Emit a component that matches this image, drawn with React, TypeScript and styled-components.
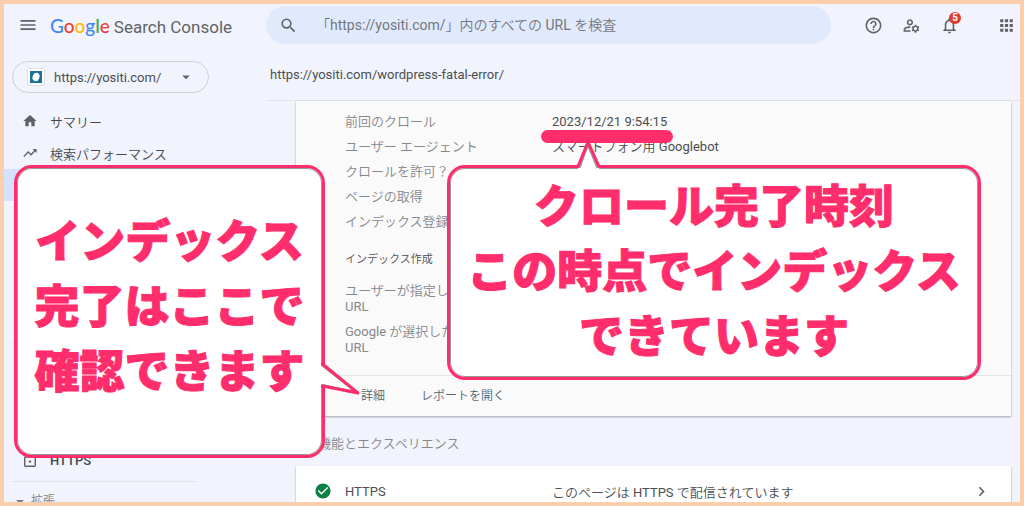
import React from "react";
import styled, { createGlobalStyle } from "styled-components";
import { MdHelpOutline, MdMenu, MdSearch, MdHome, MdTrendingUp, MdArrowDropDown, MdApps, MdChevronRight, MdCheckCircle, MdOutlineManageAccounts, MdNotificationsNone } from "react-icons/md";

const PINK = "#ff2d6b";
const LINE = "#e1e4e8";

const GlobalStyle = createGlobalStyle`
  * { box-sizing: border-box; }
  body {
    margin: 0;
    font-family: Roboto, "Noto Sans CJK JP DemiLight", "Noto Sans CJK JP", sans-serif;
    color: #4b4e52;
  }
  a { color: inherit; text-decoration: none; }
  button { font: inherit; color: inherit; background: none; border: 0; padding: 0; cursor: pointer; }
  h1, h2, h3, dl, dd, dt, p, ul { margin: 0; padding: 0; font-weight: 400; }
`;

const Frame = styled.div`
  position: relative;
  display: flex;
  height: 100vh;
  overflow: hidden;
  border: 4px solid #fccfac;
  background: #f1f4fc;
`;

const Sidebar = styled.aside`
  flex: 0 0 262px;
  padding-left: 8px;
`;

const Brand = styled.div`
  display: flex;
  align-items: center;
  gap: 12px;
  height: 42px;
  padding-left: 6px;
`;

const IconButton = styled.button`
  display: flex;
  color: #5f6368;
`;

const Logo = styled.a`
  display: flex;
  align-items: baseline;
  gap: 4px;
  font-size: 17px;
  color: #5f6368;
`;

const Wordmark = styled.span`
  font-family: Lato, sans-serif;
  font-size: 19px;
  font-weight: 500;
`;

const Letter = styled.span<{ $c: string }>`
  color: ${(p) => p.$c};
`;

const Property = styled.button`
  display: flex;
  align-items: center;
  width: 197px;
  height: 32px;
  margin-top: 15px;
  padding: 0 13px 0 14px;
  border: 1px solid #cfd1d4;
  border-radius: 16px;
  font-size: 13px;
`;

const PropertyName = styled.span`
  flex: 1;
  padding-left: 9px;
  text-align: left;
`;

const Nav = styled.nav`
  padding-top: 12px;
  font-size: 13px;
`;

const NavItem = styled.a<{ $active?: boolean; $strong?: boolean }>`
  display: flex;
  align-items: center;
  gap: 12px;
  height: 32px;
  margin-left: -8px;
  padding-left: 18px;
  color: #45484c;
  font-weight: ${(p) => (p.$strong ? 500 : 400)};
  background: ${(p) => (p.$active ? "#d3e2fd" : "none")};
  svg { color: #5f6368; }
`;

const NavGroup = styled.div<{ $h: number }>`
  display: flex;
  flex-direction: column;
  justify-content: flex-end;
  height: ${(p) => p.$h}px;
  margin-top: 5px;
  margin-right: 69px;
  border-top: 1px solid ${LINE};
`;

const NavHeading = styled.button`
  display: flex;
  align-items: center;
  gap: 7px;
  height: 36px;
  padding-left: 4px;
  font-size: 12px;
  color: #7b7e83;
`;

const Main = styled.main`
  flex: 1;
  min-width: 0;
`;

const TopBar = styled.header`
  display: flex;
  align-items: center;
  height: 42px;
`;

const SearchBox = styled.label`
  display: flex;
  flex: 1;
  align-items: center;
  gap: 16px;
  height: 38px;
  padding-left: 13px;
  border-radius: 19px;
  background: #e1eafd;
  color: #5f6368;
  input {
    flex: 1;
    min-width: 0;
    border: 0;
    outline: 0;
    background: none;
    font: inherit;
    font-size: 14px;
  }
  input::placeholder { color: #74777c; opacity: 1; }
`;

const Actions = styled.div`
  display: flex;
  align-items: center;
  gap: 19px;
  padding: 0 4px 0 33px;
`;

const Bell = styled(IconButton)`
  position: relative;
  margin-right: 19px;
`;

const Badge = styled.span`
  position: absolute;
  top: -4px;
  right: -2px;
  width: 12px;
  height: 12px;
  border-radius: 6px;
  background: #e0392d;
  color: #fff;
  font-size: 10px;
  font-weight: 700;
  line-height: 12px;
  text-align: center;
`;

const UrlBar = styled.p`
  display: flex;
  align-items: center;
  height: 55px;
  padding: 2px 0 0 4px;
  border-bottom: 1px solid ${LINE};
  font-size: 13px;
`;

const Content = styled.div`
  padding: 0 9px 0 30px;
`;

const Card = styled.section<{ $bg: string }>`
  background: ${(p) => p.$bg};
  box-shadow: 0 1px 2px rgba(60, 64, 67, 0.45);
`;

const Details = styled.dl`
  padding: 8px 0 0 49px;
  font-size: 13px;
`;

const Row = styled.div<{ $tall?: boolean }>`
  display: grid;
  grid-template-columns: 122px 1fr;
  column-gap: 85px;
  min-height: ${(p) => (p.$tall ? 41 : 25)}px;
  line-height: 16px;
  padding-top: 5px;
  white-space: nowrap;
  dt { color: #85888b; }
`;

const SubHeading = styled.h3`
  padding: 18px 0 10px 49px;
  font-size: 11px;
  line-height: 16px;
`;

const IndexDetails = styled(Details)`
  padding-top: 0;
  padding-bottom: 15px;
`;

const CardFooter = styled.div`
  display: flex;
  gap: 36px;
  height: 41px;
  padding: 0 0 4px 65px;
  border-top: 1px solid ${LINE};
  font-size: 12px;
  color: #54656f;
`;

const SectionTitle = styled.h2`
  height: 50px;
  padding-left: 22px;
  font-size: 13px;
  line-height: 56px;
  color: #85888b;
`;

const HttpsRow = styled.a`
  display: grid;
  grid-template-columns: 31px 207px 1fr 20px;
  align-items: center;
  height: 50px;
  padding: 0 19px 0 18px;
  font-size: 13px;
`;

const Marker = styled.div`
  position: absolute;
  top: 126px;
  left: 537px;
  width: 132px;
  height: 13px;
  border-radius: 7px;
  background: ${PINK};
`;

const Callout = styled.div<{ $left: number; $width: number; $height: number; $pad: number }>`
  position: absolute;
  top: 161px;
  left: ${(p) => p.$left}px;
  width: ${(p) => p.$width}px;
  height: ${(p) => p.$height}px;
  padding-top: ${(p) => p.$pad}px;
  border: 3px solid ${PINK};
  border-radius: 18px;
  background: #fff;
  box-shadow: inset 0 0 0 1px #999;
  color: ${PINK};
  font-family: "Noto Sans CJK JP", sans-serif;
  font-size: 45px;
  font-weight: 900;
  line-height: 65px;
  text-align: center;
  white-space: nowrap;
  -webkit-text-stroke: 1px ${PINK};
`;

const RightTail = styled.svg`
  position: absolute;
  top: 192px;
  right: -39px;
`;

const TopTail = styled.svg`
  position: absolute;
  top: -29px;
  left: 124px;
`;

const letters: [string, string][] = [
  ["G", "#4285f4"], ["o", "#ea4335"], ["o", "#fbbc05"], ["g", "#4285f4"], ["l", "#34a853"], ["e", "#ea4335"],
];

const crawlRows: [string, string][] = [
  ["前回のクロール", "2023/12/21 9:54:15"],
  ["ユーザー エージェント", "スマートフォン用 Googlebot"],
  ["クロールを許可？", ""],
  ["ページの取得", ""],
  ["インデックス登録", ""],
];

export default function App() {
  return (
    <>
      <GlobalStyle />
      <Frame>
        <Sidebar>
          <Brand>
            <IconButton aria-label="メニュー"><MdMenu size={20} /></IconButton>
            <Logo href="#">
              <Wordmark>{letters.map(([l, c], i) => <Letter key={i} $c={c}>{l}</Letter>)}</Wordmark>
              <span>Search Console</span>
            </Logo>
          </Brand>
          <Property>
            <svg width="18" height="18" viewBox="0 0 18 18">
              <rect x=".5" y=".5" width="17" height="17" rx="1" fill="#fff" stroke="#dde0e4" />
              <rect x="3" y="3" width="12" height="12" fill="#1b7197" />
              <ellipse cx="9" cy="9" rx="3.4" ry="4.2" fill="#fff" transform="rotate(20 9 9)" />
            </svg>
            <PropertyName>https://yositi.com/</PropertyName>
            <MdArrowDropDown size={18} color="#5f6368" />
          </Property>
          <Nav>
            <NavItem href="#"><MdHome size={16} />サマリー</NavItem>
            <NavItem href="#"><MdTrendingUp size={16} />検索パフォーマンス</NavItem>
            <NavItem href="#" $active aria-label="URL 検査" />
            <NavGroup $h={132} />
            <NavGroup $h={133}>
              <NavItem href="#" $strong>
                <svg width="16" height="16" viewBox="0 0 16 16" fill="none" stroke="currentColor" strokeWidth="1.4">
                  <rect x="2.7" y="5" width="10.6" height="9.3" rx="1" />
                  <path d="M5.3 5V3.7a2.7 2.7 0 0 1 5.4 0V5" />
                  <circle cx="8" cy="9.6" r="1.2" fill="currentColor" stroke="none" />
                </svg>
                HTTPS
              </NavItem>
            </NavGroup>
            <NavGroup $h={36}>
              <NavHeading>
                <svg width="8" height="8" viewBox="0 0 8 8"><path d="M0 4h8L4 8z" fill="currentColor" /></svg>
                拡張
              </NavHeading>
            </NavGroup>
          </Nav>
        </Sidebar>
        <Main>
          <TopBar>
            <SearchBox>
              <MdSearch size={19} />
              <input type="text" aria-label="URL を検査" placeholder="「https://yositi.com/」内のすべての URL を検査" />
            </SearchBox>
            <Actions>
              <IconButton aria-label="ヘルプ"><MdHelpOutline size={19} /></IconButton>
              <IconButton aria-label="ユーザー設定"><MdOutlineManageAccounts size={19} /></IconButton>
              <Bell aria-label="通知"><MdNotificationsNone size={19} /><Badge>5</Badge></Bell>
              <IconButton aria-label="アプリ"><MdApps size={19} /></IconButton>
            </Actions>
          </TopBar>
          <UrlBar>https://yositi.com/wordpress-fatal-error/</UrlBar>
          <Content>
            <Card $bg="#fafafa">
              <Details>
                {crawlRows.map(([k, v]) => <Row key={k}><dt>{k}</dt><dd>{v}</dd></Row>)}
              </Details>
              <SubHeading>インデックス作成</SubHeading>
              <IndexDetails>
                <Row $tall><dt>ユーザーが指定した<br />URL</dt><dd /></Row>
                <Row $tall><dt>Google が選択した<br />URL</dt><dd /></Row>
              </IndexDetails>
              <CardFooter>
                <button>詳細</button>
                <button>レポートを開く</button>
              </CardFooter>
            </Card>
            <SectionTitle>機能とエクスペリエンス</SectionTitle>
            <Card $bg="#fff">
              <HttpsRow href="#">
                <MdCheckCircle size={18} color="#0b8043" />
                <span>HTTPS</span>
                <span>このページは HTTPS で配信されています</span>
                <MdChevronRight size={19} color="#5f6368" />
              </HttpsRow>
            </Card>
          </Content>
        </Main>
        <Marker />
        <Callout $left={10} $width={311} $height={293} $pad={38}>
          インデックス<br />完了はここで<br />確認できます
          <RightTail width="40" height="38" viewBox="0 0 40 38">
            <path d="M0 4H2L37 33L2 26H0z" fill="#fff" />
            <path d="M0.5 4.5L35 32.5L0.5 25" fill="none" stroke="#999" strokeWidth="3" />
            <path d="M1.5 2.5V4L37 33L1.5 26V28" fill="none" stroke={PINK} strokeWidth="3" strokeLinejoin="round" />
            <path d="M0 6L30 29.5L0 23.5z" fill="#fff" />
          </RightTail>
        </Callout>
        <Callout $left={443} $width={534} $height={215} $pad={3}>
          クロール完了時刻<br />この時点でインデックス<br />できています
          <TopTail width="30" height="31" viewBox="0 0 30 31">
            <path d="M4 31V28L14 3L25 28V31z" fill="#fff" />
            <path d="M5.5 29L14 6L23.5 29" fill="none" stroke="#999" strokeWidth="2" />
            <path d="M2 27.5H4L14 3L25 27.5H27" fill="none" stroke={PINK} strokeWidth="3" strokeLinejoin="round" />
          </TopTail>
        </Callout>
      </Frame>
    </>
  );
}
